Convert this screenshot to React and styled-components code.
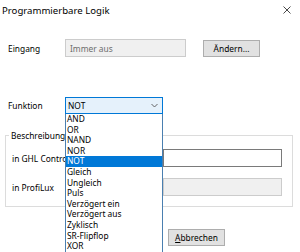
import React from "react";
import styled, { createGlobalStyle } from "styled-components";

const Global = createGlobalStyle`
  html, body {
    margin: 0;
    width: 300px;
    height: 252px;
    overflow: hidden;
    background: #ffffff;
  }
  body {
    font-family: "Noto Sans", "Open Sans", sans-serif;
    font-size: 8.4px;
    color: #000000;
  }
`;

const Dialog = styled.div`
  width: 300px;
  height: 252px;
  display: flex;
  flex-direction: column;
`;

const TitleBar = styled.div`
  height: 20px;
  display: flex;
  align-items: center;
  justify-content: space-between;
  padding: 0 9px 0 2px;
`;

const Title = styled.div`
  font-size: 9.6px;
  color: #000;
`;

const Close = styled.svg`
  width: 8px;
  height: 8px;
`;

const Content = styled.div`
  padding: 0 7px 0 5px;
  display: flex;
  flex-direction: column;
`;

const Row = styled.div`
  display: flex;
  align-items: center;
  height: ${(p) => p.h || 18}px;
  margin-top: ${(p) => p.mt || 0}px;
  padding-left: ${(p) => p.pl || 0}px;
`;

const Label = styled.div`
  width: ${(p) => p.w}px;
  flex-shrink: 0;
`;

const TextBox = styled.div`
  box-sizing: border-box;
  width: ${(p) => p.w}px;
  height: ${(p) => p.h || 18}px;
  border: 1px solid ${(p) => (p.disabled ? "#cccccc" : "#7a7a7a")};
  background: ${(p) => (p.disabled ? "#f0f0f0" : "#ffffff")};
  color: #6d6d6d;
  display: flex;
  align-items: center;
  padding-left: 4px;
`;

const Button = styled.div`
  box-sizing: border-box;
  width: ${(p) => p.w || 57}px;
  height: 17px;
  border: 1px solid #adadad;
  background: #e1e1e1;
  display: flex;
  align-items: center;
  justify-content: center;
  margin-left: ${(p) => p.ml || 0}px;
`;

const SelectWrap = styled.div`
  position: relative;
`;

const Select = styled.div`
  box-sizing: border-box;
  width: 98px;
  height: 17px;
  border: 1px solid #0078d7;
  background: #e5f1fb;
  display: flex;
  align-items: center;
  justify-content: space-between;
  padding: 0 4px 0 2px;
`;

const Chevron = styled.svg`
  width: 7px;
  height: 5px;
`;

const List = styled.div`
  position: absolute;
  top: 17px;
  left: 0;
  z-index: 5;
  box-sizing: border-box;
  width: 98px;
  height: 140px;
  border: 1px solid #4a7fb0;
  border-top: none;
  background: #ffffff;
`;

const Item = styled.div`
  height: 10.6px;
  line-height: 10.6px;
  padding-left: 1px;
  white-space: nowrap;
  background: ${(p) => (p.active ? "#0078d7" : "transparent")};
  color: ${(p) => (p.active ? "#ffffff" : "#000000")};
`;

const Group = styled.div`
  margin-top: 21px;
  border: 1px solid #dcdcdc;
  padding: 0 10px 10px 6px;
  display: flex;
  flex-direction: column;
`;

const Legend = styled.div`
  align-self: flex-start;
  margin: -6px 0 0 -3px;
  padding: 0 2px;
  line-height: 11px;
  background: #ffffff;
`;

const Footer = styled.div`
  display: flex;
  margin-top: 22px;
  padding-left: 100px;
`;

const items = [
  "AND",
  "OR",
  "NAND",
  "NOR",
  "NOT",
  "Gleich",
  "Ungleich",
  "Puls",
  "Verzögert ein",
  "Verzögert aus",
  "Zyklisch",
  "SR-Flipflop",
  "XOR",
];

export default function App() {
  return (
    <Dialog>
      <Global />
      <TitleBar>
        <Title>Programmierbare Logik</Title>
        <Close viewBox="0 0 8 8">
          <path d="M0.5 0.5 L7.5 7.5 M7.5 0.5 L0.5 7.5" stroke="#333" strokeWidth="0.9" />
        </Close>
      </TitleBar>
      <Content>
        <Row mt={19} pl={3}>
          <Label w={57}>Eingang</Label>
          <TextBox w={121} disabled>Immer aus</TextBox>
          <Button ml={17}>Ändern...</Button>
        </Row>
        <Row mt={40} h={17} pl={3}>
          <Label w={57}>Funktion</Label>
          <SelectWrap>
            <Select>
              <span>NOT</span>
              <Chevron viewBox="0 0 7 5">
                <path d="M0.5 1 L3.5 4 L6.5 1" fill="none" stroke="#555" strokeWidth="0.9" />
              </Chevron>
            </Select>
            <List>
              {items.map((t) => (
                <Item key={t} active={t === "NOT"}>
                  {t}
                </Item>
              ))}
            </List>
          </SelectWrap>
        </Row>
        <Group>
          <Legend>Beschreibung</Legend>
          <Row mt={8}>
            <Label w={151}>in GHL Control</Label>
            <TextBox w={119} />
          </Row>
          <Row mt={11}>
            <Label w={151}>in ProfiLux</Label>
            <TextBox w={119} disabled />
          </Row>
        </Group>
        <Footer>
          <Button w={57}>OK</Button>
          <Button w={57} ml={6}>
            <span>
              <u>A</u>bbrechen
            </span>
          </Button>
        </Footer>
      </Content>
    </Dialog>
  );
}
